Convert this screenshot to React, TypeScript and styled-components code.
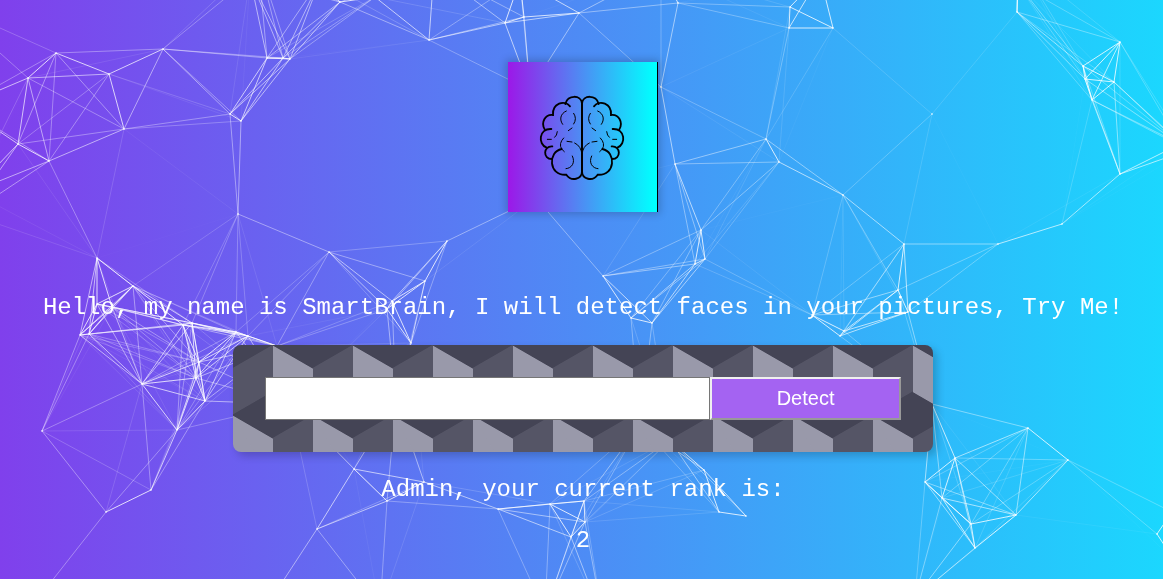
import React from 'react';
import styled, { createGlobalStyle } from 'styled-components';

const GlobalStyle = createGlobalStyle`
  *, *::before, *::after { box-sizing: border-box; }
  body {
    margin: 0;
    background: linear-gradient(to right, #8040ec, #1bd7fe) fixed;
    font-family: 'Courier New', 'Liberation Mono', monospace;
  }
`;

const Page = styled.main`
  position: relative;
  display: flex;
  flex-direction: column;
  align-items: center;
  gap: 24px;
  min-height: 100vh;
  padding: 62px 0 24px 3px;
`;

const ParticleCanvas = styled.svg`
  position: fixed;
  inset: 0;
  width: 100%;
  height: 100%;
`;

const LogoTile = styled.div`
  width: 150px;
  height: 150px;
  margin-bottom: 58px;
  border-right: 1px solid #000;
  background: linear-gradient(to right, #9c18e8, #00ffff 98%);
  box-shadow: 0 0 8px 2px rgba(0, 0, 0, 0.2);
`;

const BrainDrawing = styled.svg`
  display: block;
  width: 150px;
  height: 150px;
`;

const Message = styled.p`
  margin: 0;
  color: #fff;
  font-size: 24px;
  line-height: 27px;
  text-align: center;
`;

const cube = '#445 12%, transparent 12.5%, transparent 87%, #445 87.5%, #445';
const face = '#99a 25%, transparent 25.5%, transparent 75%, #99a 75%, #99a';

const DetectForm = styled.form`
  display: flex;
  width: 100%;
  max-width: 700px;
  padding: 32px;
  border-radius: 8px;
  background-color: #556;
  background-image:
    linear-gradient(30deg, ${cube}),
    linear-gradient(150deg, ${cube}),
    linear-gradient(30deg, ${cube}),
    linear-gradient(150deg, ${cube}),
    linear-gradient(60deg, ${face}),
    linear-gradient(60deg, ${face});
  background-size: 80px 140px;
  background-position: 0 0, 0 0, 40px 70px, 40px 70px, 0 0, 40px 70px;
  box-shadow: 4px 4px 8px 0 rgba(0, 0, 0, 0.2);
`;

const UrlInput = styled.input`
  width: 70%;
  min-width: 0;
  height: 43px;
  padding: 8px;
  border: 1px solid #767676;
  border-radius: 0;
  background: #fff;
  font: 20px 'Liberation Sans', Arial, sans-serif;
`;

const DetectButton = styled.button`
  width: 30%;
  height: 43px;
  padding: 8px 16px;
  border: 2px solid;
  border-color: #f0f0f0 #999 #999 #f0f0f0;
  background: #a463f2;
  color: #fff;
  font: 20px 'Liberation Sans', Arial, sans-serif;
`;

type Point = [number, number];

const points: Point[] = [
  [56, 53], [28, 78], [109, 74], [163, 49], [18, 144], [49, 161], [124, 129],
  [-56, 3], [-38, 106], [-28, 192], [-31, 214],
  [230, 114], [241, 121], [267, 58], [283, 58], [290, 59], [238, 214],
  [258, -40], [250, -22], [320, -20], [340, 2], [375, -3], [429, 40], [434, -30],
  [97, 258], [133, 286], [97, 304], [112, 307], [80, 335], [89, 334],
  [183, 325], [192, 323], [199, 362], [196, 378], [205, 401], [142, 384],
  [177, 430], [42, 431], [151, 490], [106, 512], [40, 596],
  [236, 332], [248, 336], [277, 346], [290, 404],
  [329, 252], [447, 241], [425, 281], [392, 301], [387, 309], [411, 343],
  [505, 23], [524, 17], [579, 13], [536, 198], [530, 90], [520, -20],
  [678, 3], [661, 87], [675, 164], [701, 230], [695, 264], [705, 259],
  [603, 276], [631, 318], [652, 323], [661, -30],
  [790, 7], [789, 28], [833, 28], [820, -24], [766, 139], [779, 162],
  [843, 195], [904, 244], [932, 114], [1017, 12], [998, 244], [1062, 224],
  [1018, -16], [1120, 42], [1083, 66], [1085, 79], [1114, 82], [1092, 100],
  [1120, 174], [1188, 150], [1180, 144],
  [898, 290], [908, 312], [812, 315], [844, 331], [840, 336],
  [354, 469], [387, 501], [317, 529], [424, 482], [498, 509],
  [550, 504], [584, 501], [585, 522], [571, 537], [640, 425], [396, 400],
  [704, 470], [719, 512], [746, 516], [670, 440],
  [932, 404], [955, 458], [925, 482], [942, 498], [971, 524], [975, 548],
  [1016, 515], [1028, 428], [1068, 460], [1157, 534], [1172, 512], [1174, 560],
  [380, 610], [915, 598], [268, 604], [545, 612], [603, 620], [1018, -40],
];

const LINK_DISTANCE = 150;

const links = points.flatMap((from, i) =>
  points.slice(i + 1).flatMap((to) => {
    const distance = Math.hypot(from[0] - to[0], from[1] - to[1]);
    return distance < LINK_DISTANCE
      ? [{ from, to, opacity: Math.min(0.8, 1.2 * (1 - distance / LINK_DISTANCE)) }]
      : [];
  }),
);

const Particles = () => (
  <ParticleCanvas viewBox="0 0 1163 579" preserveAspectRatio="xMidYMid slice" aria-hidden="true">
    <g stroke="#fff">
      {links.map(({ from, to, opacity }, i) => (
        <line key={i} x1={from[0]} y1={from[1]} x2={to[0]} y2={to[1]} strokeOpacity={opacity} />
      ))}
    </g>
    <g fill="#fff" fillOpacity="0.6">
      {points.map(([x, y], i) => (
        <circle key={i} cx={x} cy={y} r="1" />
      ))}
    </g>
  </ParticleCanvas>
);

const BrainHalf = () => (
  <>
    <g strokeWidth="5.5">
      <path d="M276 160C274 134 232 133 226 162" />
      <path d="M240 169C224 148 186 160 189 195C165 192 152 218 164 238" />
      <path d="M184 237C146 235 143 283 170 293" />
      <path d="M187 289C159 287 158 328 186 327" />
      <path d="M215 297C173 305 175 378 229 374C244 396 276 388 276 364" />
    </g>
    <g strokeWidth="3">
      <path d="M229 183C210 191 208 210 218 223M251 190Q262 206 251 222M235 242L246 234M202 245Q201 257 194 262M172 268H184" />
      <path d="M221 264Q205 281 215 297L223 305M231 274L246 276M254 279Q274 288 276 314M247 318C257 338 245 355 228 356" />
    </g>
  </>
);

const Brain = () => (
  <BrainDrawing viewBox="54 36 450 450" role="img" aria-label="Brain">
    <g fill="none" stroke="#000" strokeLinecap="round">
      <path d="M276 155V370" strokeWidth="6" />
      <BrainHalf />
      <g transform="translate(552 0) scale(-1 1)">
        <BrainHalf />
      </g>
    </g>
  </BrainDrawing>
);

export default function App() {
  return (
    <>
      <GlobalStyle />
      <Particles />
      <Page>
        <LogoTile>
          <Brain />
        </LogoTile>
        <Message>Hello, my name is SmartBrain, I will detect faces in your pictures, Try Me!</Message>
        <DetectForm onSubmit={(event) => event.preventDefault()}>
          <UrlInput type="text" aria-label="Picture address" />
          <DetectButton type="submit">Detect</DetectButton>
        </DetectForm>
        <Message>Admin, your current rank is:</Message>
        <Message>2</Message>
      </Page>
    </>
  );
}
